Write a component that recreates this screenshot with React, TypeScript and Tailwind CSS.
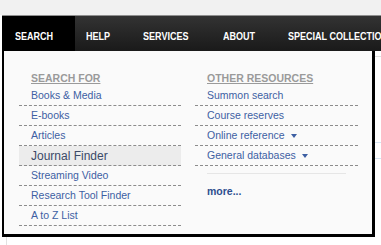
import React from 'react';

const searchFor = ['Books & Media', 'E-books', 'Articles', 'Journal Finder', 'Streaming Video', 'Research Tool Finder', 'A to Z List'];

const otherResources = [
    { label: 'Summon search', caret: false },
    { label: 'Course reserves', caret: false },
    { label: 'Online reference', caret: true },
    { label: 'General databases', caret: true },
];

const tabs = [
    { label: 'HELP', width: 'w-[57px]' },
    { label: 'SERVICES', width: 'w-[80px]' },
    { label: 'ABOUT', width: 'w-[65px]' },
    { label: 'SPECIAL COLLECTIONS', width: 'w-[140px]' },
];

function Caret() {
    return <span className="inline-block ml-[6px] w-0 h-0 border-x-[3px] border-x-transparent border-t-[4px] border-t-[#3d5fa3]" />;
}

// condensed bold label, like Arial Narrow
function NavLabel({ children }: { children: React.ReactNode }) {
    return (
        <span className="inline-block origin-left scale-x-[0.82] text-[11px] leading-[12px] font-bold text-white">
            {children}
        </span>
    );
}

export default function App() {
    return (
        <div className="relative w-[381px] h-[245px] overflow-hidden bg-white font-['Liberation_Sans',Arial,sans-serif]">
            {/* Top strip */}
            <div className="h-[15px] bg-[#f1f1f1]" />

            {/* Main nav */}
            <nav className="ml-[2px] h-[36px] flex border-t border-[#8f8f8f] bg-gradient-to-b from-[#333333] to-[#1a1a1a] whitespace-nowrap">
                <div className="w-[73px] shrink-0 pl-[13px] pt-[4px] flex items-center bg-black">
                    <NavLabel>SEARCH</NavLabel>
                </div>
                {tabs.map((tab) => (
                    <div key={tab.label} className={`${tab.width} shrink-0 pl-[11px] pt-[4px] flex items-center`}>
                        <NavLabel>{tab.label}</NavLabel>
                    </div>
                ))}
            </nav>

            {/* Page content behind the menu */}
            <div className="ml-[6px] border-l border-[#e2e2e2] h-[194px]">
                <div className="mt-[5px] border-t border-[#e0e0e0] h-[86px]" />
                <div className="border-t border-[#d6e4f3] h-[16px]" />
                <div className="border-t border-[#d6e4f3]" />
            </div>

            {/* Dropdown */}
            <div className="absolute left-[2px] top-[51px] w-[373px] h-[186px] flex pl-[15px] pr-[14px] gap-[14px] bg-[#fafafa] border-l-2 border-r-[3px] border-b-[3px] border-black">
                <div className="w-[162px]">
                    <div className="h-[35px] flex items-end pb-[2px] pl-[12px]">
                        <span className="text-[10.5px] leading-[12px] font-bold text-[#9a9a9a] underline underline-offset-[1px]">SEARCH FOR</span>
                    </div>
                    {searchFor.map((item) => (
                        <div
                            key={item}
                            className={`h-[20px] flex items-center pl-[12px] border-b border-dashed border-[#8c8c8c] ${item === 'Journal Finder' ? 'bg-[#ececec] text-[12px] text-[#3b4a68]' : 'text-[10.5px] text-[#3d5fa3]'}`}
                        >
                            {item}
                        </div>
                    ))}
                </div>

                <div className="w-[163px]">
                    <div className="h-[35px] flex items-end pb-[2px] pl-[12px]">
                        <span className="text-[10.5px] leading-[12px] font-bold text-[#9a9a9a] underline underline-offset-[1px]">OTHER RESOURCES</span>
                    </div>
                    {otherResources.map((item) => (
                        <div key={item.label} className="h-[20px] flex items-center pl-[12px] border-b border-dashed border-[#8c8c8c] text-[10.5px] text-[#3d5fa3]">
                            {item.label}
                            {item.caret && <Caret />}
                        </div>
                    ))}
                    <div className="mt-[7px] ml-[12px] w-[139px] h-px bg-[#e6e6e6]" />
                    <div className="mt-[11px] pl-[12px] text-[10.5px] leading-[12px] font-bold text-[#2d4e8f]">more...</div>
                </div>
            </div>
        </div>
    );
}
